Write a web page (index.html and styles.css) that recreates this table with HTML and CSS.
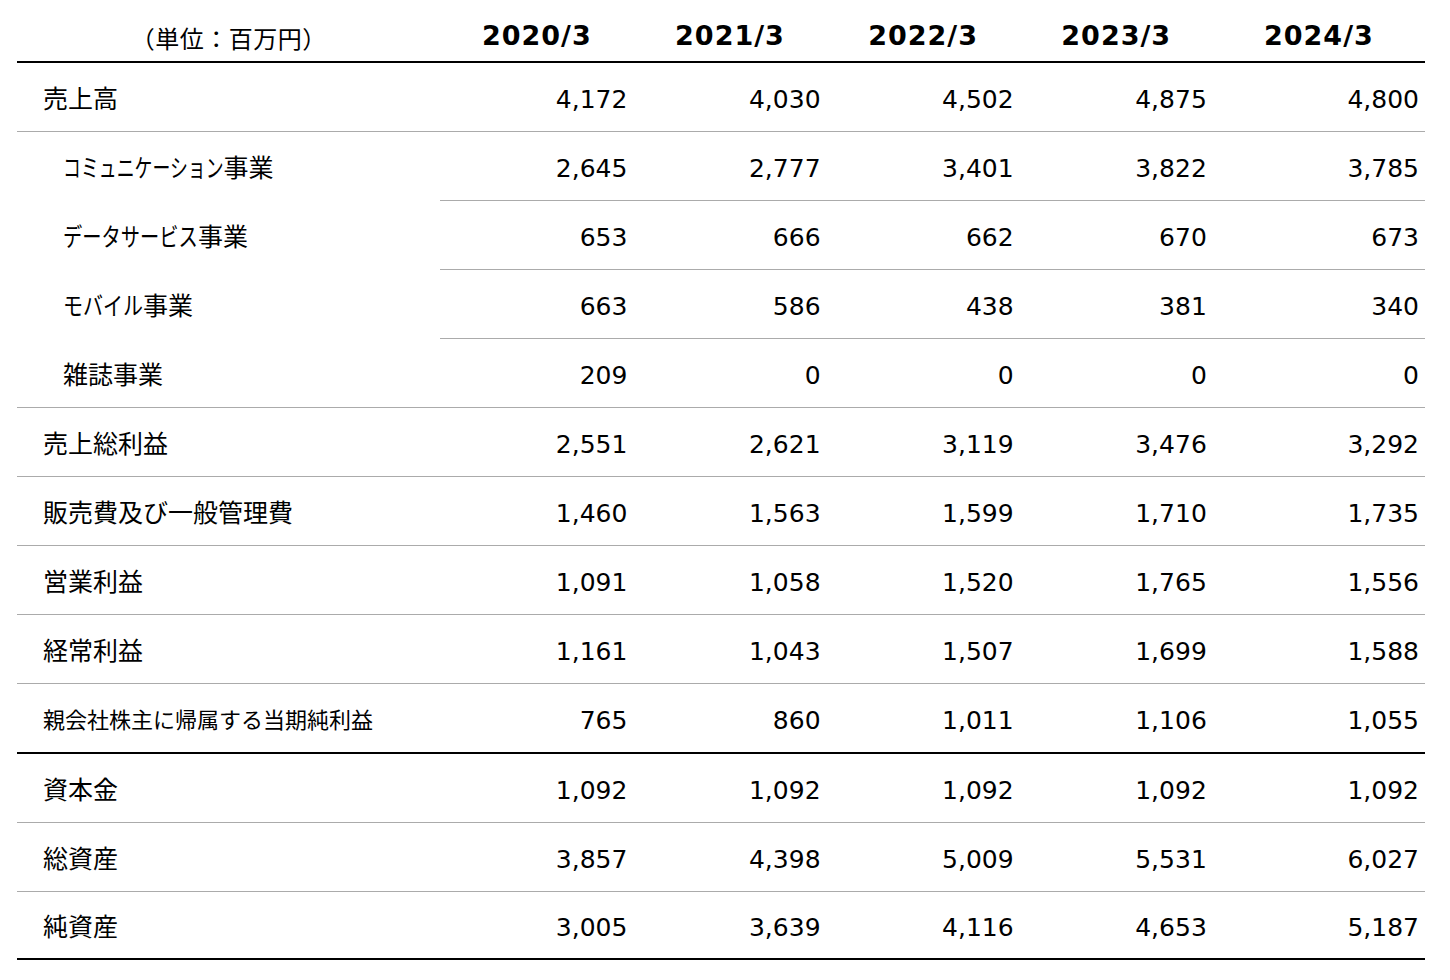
FILE: index.html
```html
<!DOCTYPE html>
<html lang="ja">
<head>
<meta charset="utf-8">
<link rel="stylesheet" href="styles.css">
</head>
<body>
<table class="fin">
  <thead>
    <tr>
      <th class="unit">（単位：百万円）</th>
      <th>2020/3</th>
      <th>2021/3</th>
      <th>2022/3</th>
      <th>2023/3</th>
      <th class="last">2024/3</th>
    </tr>
  </thead>
  <tbody>
    <tr><td class="lbl">売上高</td><td>4,172</td><td>4,030</td><td>4,502</td><td>4,875</td><td class="last">4,800</td></tr>
    <tr class="sub"><td class="lbl"><span class="kana k9">コミュニケーション</span>事業</td><td>2,645</td><td>2,777</td><td>3,401</td><td>3,822</td><td class="last">3,785</td></tr>
    <tr class="sub"><td class="lbl"><span class="kana k7">データサービス</span>事業</td><td>653</td><td>666</td><td>662</td><td>670</td><td class="last">673</td></tr>
    <tr class="sub"><td class="lbl"><span class="kana k4">モバイル</span>事業</td><td>663</td><td>586</td><td>438</td><td>381</td><td class="last">340</td></tr>
    <tr class="sub endsub"><td class="lbl">雑誌事業</td><td>209</td><td>0</td><td>0</td><td>0</td><td class="last">0</td></tr>
    <tr><td class="lbl">売上総利益</td><td>2,551</td><td>2,621</td><td>3,119</td><td>3,476</td><td class="last">3,292</td></tr>
    <tr><td class="lbl">販売費及び一般管理費</td><td>1,460</td><td>1,563</td><td>1,599</td><td>1,710</td><td class="last">1,735</td></tr>
    <tr><td class="lbl">営業利益</td><td>1,091</td><td>1,058</td><td>1,520</td><td>1,765</td><td class="last">1,556</td></tr>
    <tr><td class="lbl">経常利益</td><td>1,161</td><td>1,043</td><td>1,507</td><td>1,699</td><td class="last">1,588</td></tr>
    <tr class="strong"><td class="lbl small">親会社株主に帰属する当期純利益</td><td>765</td><td>860</td><td>1,011</td><td>1,106</td><td class="last">1,055</td></tr>
    <tr><td class="lbl">資本金</td><td>1,092</td><td>1,092</td><td>1,092</td><td>1,092</td><td class="last">1,092</td></tr>
    <tr><td class="lbl">総資産</td><td>3,857</td><td>4,398</td><td>5,009</td><td>5,531</td><td class="last">6,027</td></tr>
    <tr class="strong final"><td class="lbl">純資産</td><td>3,005</td><td>3,639</td><td>4,116</td><td>4,653</td><td class="last">5,187</td></tr>
  </tbody>
</table>
</body>
</html>
```
FILE: styles.css
```css
html, body {
  margin: 0;
  padding: 0;
  background: #ffffff;
}
body {
  padding-left: 17px;
  font-family: "DejaVu Sans", "Noto Sans CJK JP", sans-serif;
  color: #000;
}
.fin {
  border-collapse: separate;
  border-spacing: 0;
  width: 1408px;
  table-layout: fixed;
}
.fin th {
  height: 63px;
  padding: 10px 0 0 0;
  box-sizing: border-box;
  border-bottom: 2px solid #000;
  font-weight: bold;
  font-size: 27px;
  text-align: center;
  width: 193px;
  letter-spacing: 1px;
}
.fin th.unit {
  width: 423px;
  font-weight: normal;
  font-size: 24px;
  font-family: "Noto Sans CJK JP", sans-serif;
  letter-spacing: 0.5px;
  padding-top: 14px;
}
.fin th.last {
  width: 212px;
}
.fin td {
  height: 64px;
  padding: 4px 6px 0 0;
  box-sizing: content-box;
  border-bottom: 1px solid #ababab;
  text-align: right;
  font-size: 25px;
  vertical-align: middle;
}
.fin td.lbl {
  height: 68px;
  padding: 0 0 0 26px;
  text-align: left;
  font-family: "Noto Sans CJK JP", sans-serif;
  font-size: 25px;
  white-space: nowrap;
}
.fin td.lbl.small {
  font-size: 22px;
}
.kana {
  display: inline-block;
  transform-origin: 0 50%;
}
.kana.k9 {
  transform: scaleX(0.715);
  margin-right: -64px;
}
.kana.k7 {
  transform: scaleX(0.77);
  margin-right: -40px;
}
.kana.k4 {
  transform: scaleX(0.8);
  margin-right: -20px;
}
.fin tr.sub td.lbl {
  padding-left: 46px;
  border-bottom-color: transparent;
}
.fin tr.sub.endsub td.lbl {
  border-bottom-color: #ababab;
}
.fin tr.strong td {
  border-bottom: 2px solid #000;
}
.fin tr.final td {
  height: 62px;
}
.fin tr.final td.lbl {
  height: 66px;
}
```
